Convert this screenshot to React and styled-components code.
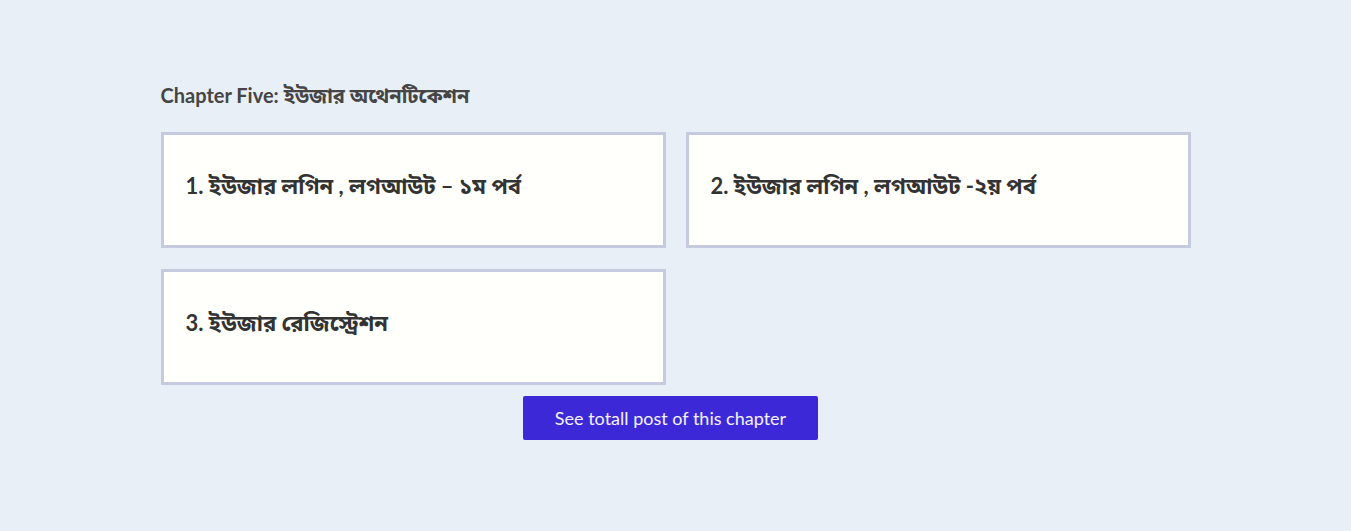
import React from "react";
import styled, { createGlobalStyle } from "styled-components";

const Global = createGlobalStyle`
  html, body { margin: 0; padding: 0; background: #e8eff7; }
  body { font-family: "Lato", "Noto Sans", "Noto Sans Bengali", sans-serif; }
`;

const Page = styled.div`
  min-height: 531px;
  display: flex;
  justify-content: center;
  padding-top: 78px;
  box-sizing: border-box;
`;

const Section = styled.section`
  width: 1030px;
  display: flex;
  flex-direction: column;
`;

const Title = styled.h2`
  margin: 0 0 20px 0;
  font-size: 20px;
  line-height: 34px;
  font-weight: 700;
  color: #454545;
  font-family: "Lato", "Noto Sans", "Noto Sans Bengali", sans-serif;
`;

const Grid = styled.div`
  display: grid;
  grid-template-columns: 505px 505px;
  column-gap: 20px;
  row-gap: 21px;
`;

const Card = styled.a`
  box-sizing: border-box;
  height: 116px;
  background: #fffffc;
  border: 3px solid #c6cadf;
  display: flex;
  align-items: center;
  padding: 0 22px 6px;
  text-decoration: none;
`;

const CardTitle = styled.h3`
  margin: 0;
  font-size: 22px;
  font-weight: 700;
  color: #333333;
  font-family: "Lato", "Noto Sans", "Noto Sans Bengali", sans-serif;
`;

const ButtonRow = styled.div`
  display: flex;
  justify-content: center;
  margin-top: 11px;
  padding-right: 10px;
`;

const Button = styled.button`
  width: 295px;
  height: 44px;
  border: none;
  border-radius: 2px;
  background: #3c28d6;
  color: #f4f2ff;
  font-size: 18px;
  font-family: "Lato", "Noto Sans", sans-serif;
  cursor: pointer;
`;

const posts = [
  "1. ইউজার লগিন , লগআউট – ১ম পর্ব",
  "2. ইউজার লগিন , লগআউট -২য় পর্ব",
  "3. ইউজার রেজিস্ট্রেশন",
];

export default function App() {
  return (
    <>
      <Global />
      <Page>
        <Section>
          <Title>Chapter Five: ইউজার অথেনটিকেশন</Title>
          <Grid>
            {posts.map((p) => (
              <Card key={p} href="#">
                <CardTitle>{p}</CardTitle>
              </Card>
            ))}
          </Grid>
          <ButtonRow>
            <Button>See totall post of this chapter</Button>
          </ButtonRow>
        </Section>
      </Page>
    </>
  );
}
